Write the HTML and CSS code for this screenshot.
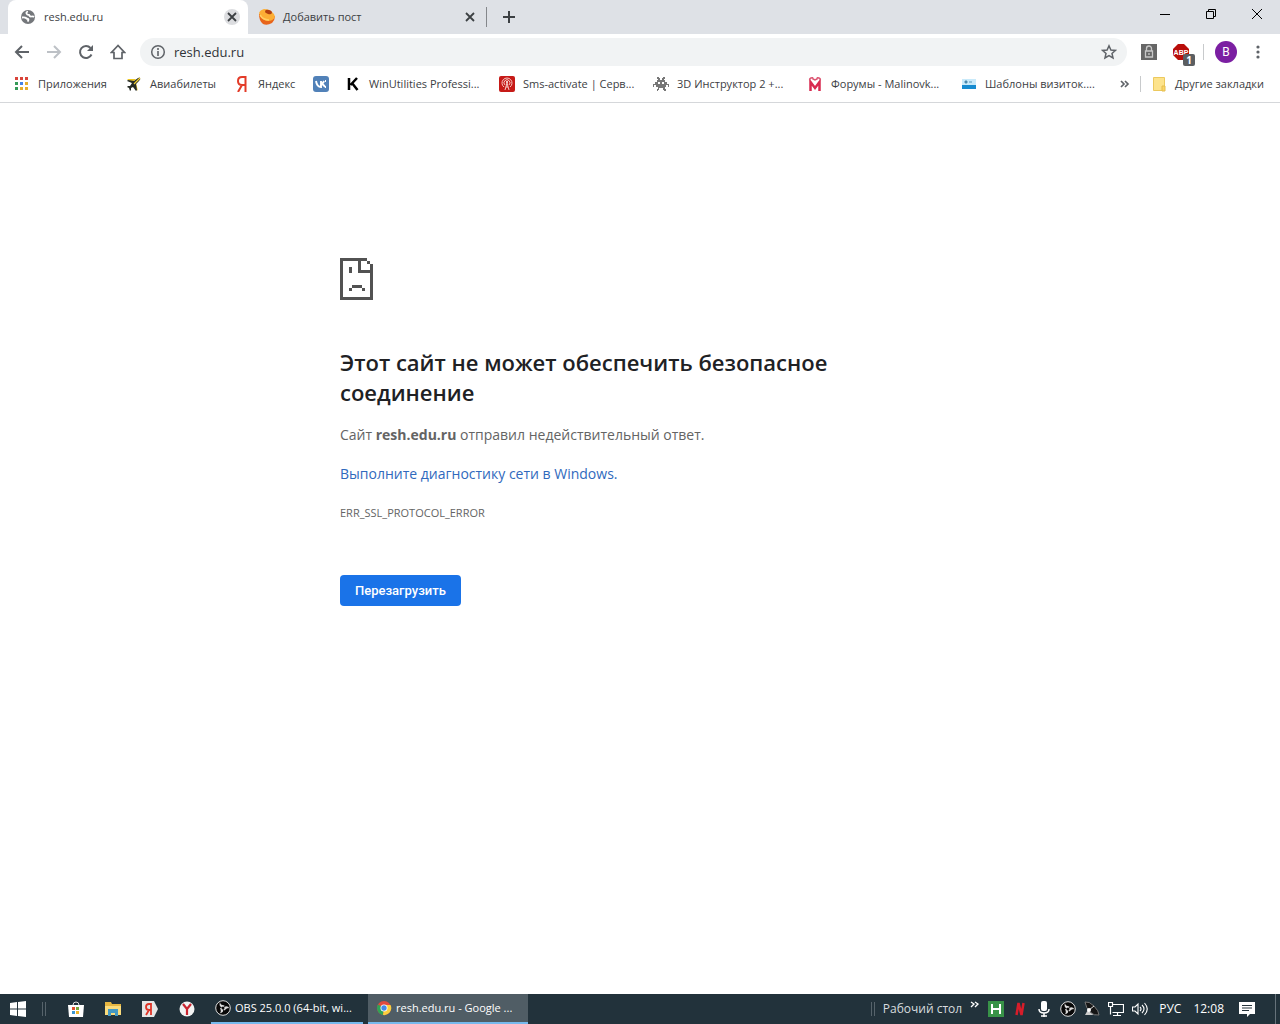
FILE: index.html
```html
<!DOCTYPE html>
<html lang="ru">
<head>
<meta charset="utf-8">
<title>resh.edu.ru</title>
<link rel="stylesheet" href="styles.css">
</head>
<body>
<header class="browser">
  <div class="tabstrip">
    <div class="tab tab-active">
      <svg class="icon16" viewBox="0 0 16 16"><circle cx="8" cy="8" r="7" fill="#74777b"/><path d="M2 8.500q3-.5 4 .5t2 1q1 1-.5 2.500M8 2.500q-2 .5-1.500 2T9 6q1 2 2.500 1.500T14 8" fill="none" stroke="#fff" stroke-width="1.800"/></svg>
      <span class="tab-title">resh.edu.ru</span>
      <button class="close close-round" aria-label="Закрыть вкладку"><svg class="icon16" viewBox="0 0 16 16"><path d="M4 4l8 8M12 4l-8 8" stroke="#3c4043" stroke-width="1.800"/></svg></button>
    </div>
    <div class="tab">
      <svg class="icon16" viewBox="0 0 16 16"><path d="M0 5l16 2q0 4-3 7-5 3-9 1Q0 12 0 5z" fill="#e8641a"/><path d="M0 4q1-3 5-4 5 0 8 3 3 2 3 5-2 4-7 4Q2 11 0 4z" fill="#fcae35"/><path d="M1 6q3 5 9 5" fill="none" stroke="#ffce62" stroke-width="1.500"/><ellipse cx="9.500" cy="3" rx="3.500" ry="2" transform="rotate(15 9.500 3)" fill="#b2400f"/></svg>
      <span class="tab-title">Добавить пост</span>
      <button class="close" aria-label="Закрыть вкладку"><svg class="icon16" viewBox="0 0 16 16"><path d="M4 4l8 8M12 4l-8 8" stroke="#3c4043" stroke-width="1.800"/></svg></button>
    </div>
    <button class="newtab" aria-label="Новая вкладка"><svg class="icon16" viewBox="0 0 16 16"><path d="M8 2v12M2 8h12" stroke="#3c4043" stroke-width="2"/></svg></button>
    <div class="window-controls">
      <button aria-label="Свернуть"><svg class="icon16" viewBox="0 0 16 16"><path d="M3 8.500h10" stroke="#000"/></svg></button>
      <button aria-label="Свернуть в окно"><svg class="icon16" viewBox="0 0 16 16"><path d="M3.500 5.500h7v7h-7zM5.500 5V3.500h7v7H11" fill="none" stroke="#000"/></svg></button>
      <button aria-label="Закрыть"><svg class="icon16" viewBox="0 0 16 16"><path d="M3 3l10 10M13 3L3 13" stroke="#000"/></svg></button>
    </div>
  </div>

  <div class="toolbar">
    <button class="nav" aria-label="Назад"><svg class="icon16" viewBox="0 0 16 16"><path d="M15 8H2M8 2L2 8l6 6" fill="none" stroke="#5f6368" stroke-width="2"/></svg></button>
    <button class="nav" aria-label="Вперёд"><svg class="icon16" viewBox="0 0 16 16"><path d="M1 8h13M8 2l6 6-6 6" fill="none" stroke="#bdc1c6" stroke-width="2"/></svg></button>
    <button class="nav" aria-label="Обновить"><svg class="icon16" viewBox="0 0 16 16"><path d="M13.500 10.500A6 6 0 1 1 12.500 4" fill="none" stroke="#5f6368" stroke-width="2"/><path d="M15 1v6H9z" fill="#5f6368"/></svg></button>
    <button class="nav" aria-label="Домой"><svg class="icon16" viewBox="0 0 16 16"><path d="M8 1.500L1.500 8.500H4v6h8v-6h2.500z" fill="none" stroke="#5f6368" stroke-width="1.700"/></svg></button>
    <div class="omnibox">
      <svg class="icon16" viewBox="0 0 16 16"><circle cx="8" cy="8" r="6.300" fill="none" stroke="#5f6368" stroke-width="1.500"/><path d="M8 7v5M8 4v2" stroke="#5f6368" stroke-width="1.600"/></svg>
      <input class="address" type="text" value="resh.edu.ru" aria-label="Адресная строка">
      <button class="star" aria-label="Добавить в закладки"><svg class="icon16" viewBox="0 0 16 16"><path d="M8 1.800l1.900 4.200 4.500.4-3.400 3 1 4.500L8 11.500l-4 2.400 1-4.500-3.400-3 4.500-.4z" fill="none" stroke="#5f6368" stroke-width="1.500"/></svg></button>
    </div>
    <button class="ext" aria-label="Расширение"><svg class="icon16" viewBox="0 0 16 16"><path d="M0 0h16v16H0z" fill="#666"/><path d="M5.500 7V4.500a2.500 2.500 0 0 1 5 0V7M4.500 7h7v6h-7zM8 9v2" fill="none" stroke="#c8c8c8" stroke-width="1.300"/></svg></button>
    <button class="ext abp" aria-label="Adblock Plus">
      <svg class="icon16" viewBox="0 0 16 16"><path d="M5 0h6l5 5v6l-5 5H5l-5-5V5z" fill="#b90e0a"/><text x="8" y="11" text-anchor="middle" class="abp-text">ABP</text></svg>
      <span class="badge">1</span>
    </button>
    <span class="divider"></span>
    <button class="avatar" aria-label="Профиль">В</button>
    <button class="menu" aria-label="Меню"><svg class="icon16" viewBox="0 0 16 16"><g fill="#5f6368"><circle cx="8" cy="3" r="1.600"/><circle cx="8" cy="8" r="1.600"/><circle cx="8" cy="13" r="1.600"/></g></svg></button>
  </div>

  <nav class="bookmarks">
    <div class="bookmark-list">
      <a href="#"><svg class="icon16" viewBox="0 0 16 16"><path d="M1 1h3v3H1zM6 1h3v3H6zM11 1h3v3h-3z" fill="#d9443a"/><path d="M1 6h3v3H1zM1 11h3v3H1z" fill="#359a57"/><path d="M6 6h3v3H6z" fill="#4382e8"/><path d="M11 6h3v3h-3zM6 11h3v3H6zM11 11h3v3h-3z" fill="#e5ad2d"/></svg><span>Приложения</span></a>
      <a href="#"><svg class="icon16" viewBox="0 0 16 16"><path d="M1 3l9 0-4 4zM10 7l2 8-4-6z" fill="#ecc623"/><path d="M14 2q1 1-1 3l-3 3 1 6-1 1-3-4-2 1v2l-1 1-1-3-2-1 1-1h2l2-3-5-2 1-1 6 1 4-3q2-1 2 0z" fill="#252a24"/><path d="M8 8l6-6" stroke="#f2cf33" stroke-width="1.300"/></svg><span>Авиабилеты</span></a>
      <a href="#"><svg class="icon16" viewBox="0 0 16 16"><path d="M11.500 0v16M11 1H8C5 1 4 3 4 5s1 4 4 4h3M8 9l-4 7" fill="none" stroke="#e33b28" stroke-width="2"/></svg><span>Яндекс</span></a>
      <a href="#" aria-label="ВКонтакте"><svg class="icon16" viewBox="0 0 16 16"><rect width="16" height="16" rx="3" fill="#5181b8"/><path d="M3 5q1 6 5 6V5M8 8c2 0 2-1 3-3m-3 3c2 0 3 1 4 3M12 5l1 0M12 11h1" fill="none" stroke="#fff" stroke-width="1.900"/></svg></a>
      <a href="#"><svg class="icon16" viewBox="0 0 16 16"><path d="M4 2v12M12 2L5.500 9M7 7l5.500 7" fill="none" stroke="#000" stroke-width="2.500"/></svg><span>WinUtilities Professi...</span></a>
      <a href="#"><svg class="icon16" viewBox="0 0 16 16"><rect width="16" height="16" rx="2" fill="#c61a17"/><g fill="none" stroke="#f7c9c5"><path d="M5 11a5 5 0 1 1 6 0M6 9a3 3 0 1 1 4 0"/><path d="M8 7l-2 7M8 7l2 7M7 11h2"/></g><circle cx="8" cy="6" r="1" fill="#fff"/></svg><span>Sms-activate | Серв...</span></a>
      <a href="#"><svg class="icon16" viewBox="0 0 16 16"><path d="M4 1h2v1h1v2h2V2h1V1h2v2h-1v1h1v2h2v2h2v3h-1V9h-2v2h-1v2h1v2h-2v-1h-1v-2H6v2H5v1H4v-2h1v-2H3V9H1v2H0V8h2V6h2V4h1V3H4z" fill="#777"/><path d="M5 6h2v2H5zM9 6h2v2H9z" fill="#fff"/></svg><span>3D Инструктор 2 +...</span></a>
      <a href="#"><svg class="icon16" viewBox="0 0 16 16"><path d="M3.500 15V6L8 12l4.500-6v9" fill="none" stroke="#d92a50" stroke-width="2.500"/><path d="M3 5q-1-2 1-3 2-1 2 1l2 1 2-1q0-2 2-1 2 1 1 3" fill="none" stroke="#dc5773" stroke-width="1.500"/></svg><span>Форумы - Malinovk...</span></a>
      <a href="#"><svg class="icon16" viewBox="0 0 16 16"><path d="M1 3h14v10H1z" fill="#168bd0"/><path d="M1 3h14v6H1z" fill="#c9eafa"/><path d="M4 5h2v2H4zM8 6h3" fill="#24658c" stroke="#5794b8"/></svg><span>Шаблоны визиток....</span></a>
    </div>
    <button class="more" aria-label="Ещё закладки"><svg class="icon16" viewBox="0 0 16 16"><path d="M4 5l3 3-3 3M8 5l3 3-3 3" fill="none" stroke="#5f6368" stroke-width="1.700"/></svg></button>
    <span class="divider"></span>
    <a class="other" href="#"><svg class="icon16" viewBox="0 0 16 16"><path d="M2.500 1.500h11v13h-11z" fill="#fde38c" stroke="#ecc95e"/><path d="M11 10h3v5h-3z" fill="#fbd568" stroke="#e5be4f"/></svg><span>Другие закладки</span></a>
  </nav>
</header>

<main class="page">
  <div class="error">
    <svg class="sad" viewBox="0 0 33 42" shape-rendering="crispEdges"><path d="M0 0h27v3h3v3h3v36H0zM3 3v36h27V15H18V3zM21 3v9h9V6h-3V3z" fill="#525252" fill-rule="evenodd"/><path d="M9 9h3v6H9zM12 27h10v3H12zM9 30h3v3H9zM22 30h3v3h-3z" fill="#525252"/></svg>
    <h1>Этот сайт не может обеспечить безопасное соединение</h1>
    <p>Сайт <strong>resh.edu.ru</strong> отправил недействительный ответ.</p>
    <p><a href="#">Выполните диагностику сети в Windows.</a></p>
    <p class="code">ERR_SSL_PROTOCOL_ERROR</p>
    <button class="reload">Перезагрузить</button>
  </div>
</main>

<footer class="taskbar">
  <button class="start" aria-label="Пуск"><svg class="icon16" viewBox="0 0 16 16"><path d="M0 2l7-1v6.500H0zM8 1l8-1v7.500H8zM0 8.500h7V15l-7-1zM8 8.500h8V16l-8-1z" fill="#fff"/></svg></button>
  <span class="grip"></span>
  <div class="pinned">
    <button aria-label="Магазин"><svg class="icon16" viewBox="0 0 16 16"><path d="M5 4q0-3 3-3t3 3" fill="none" stroke="#ddd"/><path d="M0 4h16l-1 12H1z" fill="#fff"/><path d="M4 6h3v3H4z" fill="#e2502f"/><path d="M8 6h3v3H8z" fill="#7ba83a"/><path d="M4 10h3v3H4z" fill="#3d96d2"/><path d="M8 10h3v3H8z" fill="#edb52b"/></svg></button>
    <button aria-label="Проводник"><svg class="icon16" viewBox="0 0 16 16"><path d="M0 1h6l1 2h9v11H0z" fill="#e6b641"/><path d="M0 5h16v9H0z" fill="#fbdc7c"/><path d="M3 15V8h10v7h-3v-3H6v3z" fill="#4499c4"/></svg></button>
    <button aria-label="Яндекс"><svg class="icon16" viewBox="0 0 16 16"><path d="M0 0h12l4 8-4 8H0z" fill="#e6e6e6"/><path d="M9 2v12M9 3H7Q4 3 4 6t3 3h2M7 9l-3 5" fill="none" stroke="#df3528" stroke-width="1.800"/></svg></button>
    <button aria-label="Яндекс.Браузер"><svg class="icon16" viewBox="0 0 16 16"><circle cx="8" cy="8" r="7.500" fill="#f3f3f3"/><path d="M4 3l4 5 4-5M8 8v6" fill="none" stroke="#ca2530" stroke-width="2.200"/></svg></button>
  </div>
  <button class="task"><svg class="icon16" viewBox="0 0 16 16"><circle cx="8" cy="8" r="7.300" fill="#080808" stroke="#ddd"/><g fill="#ddd"><path d="M8.500 8Q3 7 5 2q0 3 4.500 3.500z"/><path d="M8.500 8Q3 7 5 2q0 3 4.500 3.500z" transform="rotate(120 8 8)"/><path d="M8.500 8Q3 7 5 2q0 3 4.500 3.500z" transform="rotate(240 8 8)"/></g><circle cx="8" cy="8" r="1.500" fill="#080808"/></svg><span>OBS 25.0.0 (64-bit, wi...</span></button>
  <button class="task task-active"><svg class="icon16" viewBox="0 0 16 16"><circle cx="8" cy="8" r="7" fill="#e14a3d"/><path d="M8 8L2 4.500A7 7 0 0 0 7 15z" fill="#2ea457"/><path d="M8 8V5h6.500A7 7 0 0 1 7 15z" fill="#fbce3e"/><circle cx="8" cy="8" r="3.500" fill="#fff"/><circle cx="8" cy="8" r="2.700" fill="#4689e8"/></svg><span>resh.edu.ru - Google ...</span></button>
  <div class="tray">
    <span class="grip"></span>
    <span class="desktop">Рабочий стол</span>
    <svg class="chevrons" viewBox="0 0 10 16"><path d="M1 1l3 2-3 3M5 1l3 2-3 3" fill="none" stroke="#fff" stroke-width="1.300"/></svg>
    <div class="tray-icons">
      <svg class="icon16" viewBox="0 0 16 16"><path d="M0 0h16v16H0z" fill="#389348"/><path d="M4 3v10M12 3v10M4 8h8" stroke="#fff" stroke-width="2"/></svg>
      <svg class="icon16" viewBox="0 0 16 16"><path d="M4.500 14L6.500 2l3 12 2-12" fill="none" stroke="#d71d2a" stroke-width="2.500"/></svg>
      <svg class="icon16" viewBox="0 0 16 16"><rect x="5" y="0" width="6" height="10" rx="2" fill="#fff"/><path d="M3 8q0 4 5 4t5-4M8 12v4M5 15h6" fill="none" stroke="#fff" stroke-width="1.500"/></svg>
      <svg class="icon16" viewBox="0 0 16 16"><circle cx="8" cy="8" r="7.300" fill="#080808" stroke="#ddd"/><g fill="#ddd"><path d="M8.500 8Q3 7 5 2q0 3 4.500 3.500z"/><path d="M8.500 8Q3 7 5 2q0 3 4.500 3.500z" transform="rotate(120 8 8)"/><path d="M8.500 8Q3 7 5 2q0 3 4.500 3.500z" transform="rotate(240 8 8)"/></g><circle cx="8" cy="8" r="1.500" fill="#080808"/></svg>
      <svg class="icon16" viewBox="0 0 16 16"><path d="M5 7l-4 7h8l-2-5" fill="#ccc"/><path d="M1 1q4-1 9 4t5 9q-5 1-9-3T1 1z" fill="#151515" stroke="#777"/><path d="M5 9l5-4" stroke="#ddd"/><circle cx="5" cy="9" r="2" fill="#fff"/></svg>
      <svg class="icon16" viewBox="0 0 16 16"><path d="M5 3.500h10.500v8H4.500M.500 1.500h4v4h-4zM2.500 5.500v8M9.500 12v3M5 14.500h8" fill="none" stroke="#fff" stroke-width="1.200"/></svg>
      <svg class="icon16" viewBox="0 0 16 16"><path d="M.500 6h2.500l3-3v10l-3-3H.500zM8 6q2 2 0 4M10 4q4 4 0 8M12.500 2q5.500 6 0 12" fill="none" stroke="#fff" stroke-width="1.100"/></svg>
    </div>
    <span class="lang">РУС</span>
    <time class="clock">12:08</time>
    <button class="notice" aria-label="Уведомления"><svg class="icon16" viewBox="0 0 16 16"><path d="M0 1h16v12h-5l-3 3v-3H0z" fill="#fff"/><path d="M3 4.500h10M3 7h10M3 9.500h7" stroke="#26343c" stroke-width="1.200"/></svg></button>
    <span class="show-desktop"></span>
  </div>
</footer>
</body>
</html>
```
FILE: styles.css
```css
* { box-sizing: border-box; }

body {
  display: flex;
  flex-direction: column;
  min-height: 100vh;
  margin: 0;
  background: #fff;
  color: #3c4043;
  font-family: "Open Sans", "Noto Sans", sans-serif;
  font-size: 12px;
  line-height: 16px;
}

button {
  display: flex;
  align-items: center;
  justify-content: center;
  flex: none;
  padding: 0;
  border: 0;
  background: none;
  color: inherit;
  font: inherit;
}

a { color: inherit; text-decoration: none; }
span { white-space: nowrap; }
.icon16 { flex: none; width: 16px; height: 16px; }

.browser { border-bottom: 1px solid #d5d7da; }

.tabstrip {
  display: flex;
  height: 34px;
  padding-left: 8px;
  background: #dee1e6;
}
.tab {
  display: flex;
  align-items: center;
  width: 238px;
  padding: 0 8px 0 11px;
  gap: 8px;
}
.tab-active {
  width: 240px;
  padding-left: 12px;
  border-radius: 8px 8px 0 0;
  background: #fff;
}
.tab-title { flex: 1; font-size: 11px; }
.close { width: 16px; height: 16px; }
.close-round { border-radius: 50%; background: #dcdde0; }
.newtab {
  width: 44px;
  height: 20px;
  margin-top: 7px;
  border-left: 1px solid #84878b;
}
.window-controls { display: flex; height: 28px; margin-left: auto; }
.window-controls button { width: 46px; }

.toolbar {
  display: flex;
  align-items: center;
  height: 36px;
  padding: 0 6px;
}
.nav { width: 32px; height: 32px; }
.omnibox {
  display: flex;
  flex: 1;
  align-items: center;
  height: 28px;
  margin: 0 12px 0 6px;
  padding: 0 10px;
  gap: 8px;
  border-radius: 14px;
  background: #f1f3f4;
}
.address {
  flex: 1;
  min-width: 0;
  padding: 0;
  border: 0;
  background: none;
  color: #303438;
  font: inherit;
  font-size: 13px;
}
.ext { width: 20px; height: 28px; margin-right: 12px; }
.abp { position: relative; }
.abp-text { fill: #fff; font: bold 7px "Liberation Sans", sans-serif; }
.badge {
  position: absolute;
  right: -4px;
  bottom: 0;
  width: 12px;
  height: 12px;
  border-radius: 2px;
  background: #5b5e61;
  color: #fff;
  font-size: 10px;
  font-weight: 700;
  line-height: 12px;
}
.divider { width: 1px; height: 16px; background: #c8cacc; }
.avatar {
  width: 22px;
  height: 22px;
  margin-left: 11px;
  border-radius: 50%;
  background: #7b1fa2;
  color: #fff;
  font-family: Roboto, sans-serif;
}
.menu { width: 32px; height: 28px; margin-left: 5px; }

.bookmarks {
  display: flex;
  align-items: center;
  height: 32px;
  padding: 0 16px 4px 14px;
}
.bookmarks a { display: flex; align-items: center; gap: 8px; font-size: 11px; }
.bookmark-list {
  display: grid;
  flex: 1;
  grid-template-columns: 112px 108px 79px 32px repeat(4, 154px) 1fr;
}
.more { width: 16px; height: 16px; margin-right: 7px; }
.bookmarks .other { margin-left: 10px; }

.page { flex: 1; padding: 155px 24px 40px; }
.error { max-width: 600px; margin: 0 auto; color: #646464; font-size: 14px; line-height: 24px; }
.sad { display: block; width: 33px; height: 42px; }
.error h1 {
  max-width: 540px;
  margin: 47px 0 16px;
  color: #202124;
  font-size: 22px;
  font-weight: 600;
  line-height: 30px;
}
.error p { margin: 0 0 15px; }
.error p a { color: #3069bd; }
.error .code { font-size: 11px; }
.reload {
  height: 31px;
  margin-top: 50px;
  padding: 0 15px;
  border-radius: 4px;
  background: #1a73e8;
  color: #fff;
  font-family: Roboto, sans-serif;
  font-size: 13px;
  font-weight: 500;
}

.taskbar {
  display: flex;
  align-items: stretch;
  height: 30px;
  background: #22323b;
  color: #fff;
}
.start { width: 36px; }
.grip {
  align-self: center;
  width: 4px;
  height: 14px;
  margin-left: 6px;
  border: solid #56636b;
  border-width: 0 1px;
}
.pinned { display: flex; gap: 5px; margin: 0 8px 0 14px; }
.pinned button { width: 32px; }
.task {
  justify-content: flex-start;
  width: 152px;
  margin-right: 5px;
  padding-left: 4px;
  gap: 4px;
  border-bottom: 2px solid #76b9ed;
  font-size: 11px;
}
.task-active { width: 160px; padding-left: 8px; background: #505d65; }
.tray { display: flex; align-items: center; margin-left: auto; }
.desktop { margin-left: 8px; color: #d8dcdf; }
.chevrons { width: 10px; height: 16px; margin-left: 8px; }
.tray-icons { display: flex; gap: 8px; margin-left: 8px; }
.lang { margin-left: 11px; }
.clock { margin-left: 12px; }
.notice { width: 32px; height: 30px; margin: 0 12px 0 7px; }
.show-desktop { width: 5px; height: 30px; border-left: 1px solid #66727a; }
```
